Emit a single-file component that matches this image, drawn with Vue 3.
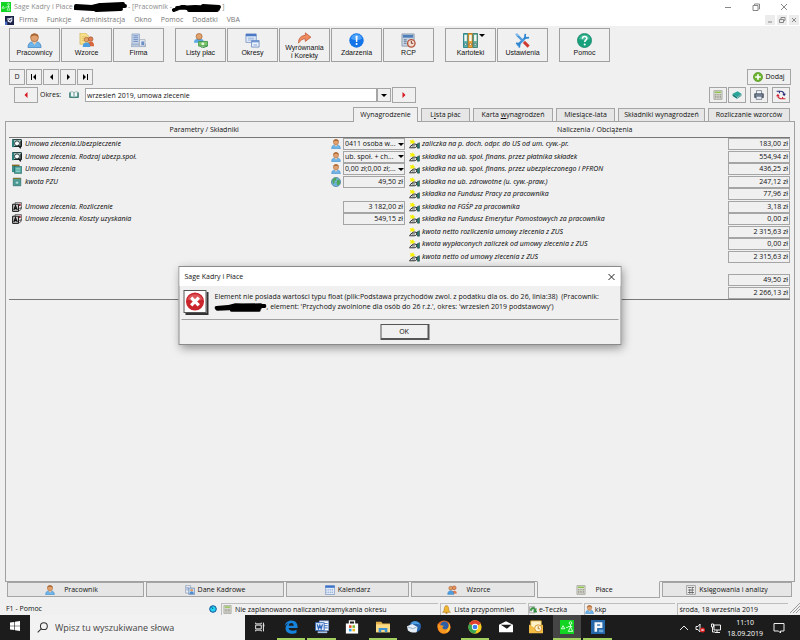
<template>
  <svg class="sprite" aria-hidden="true">
    <symbol id="user" viewBox="0 0 16 16">
      <path d="M1 15.500c0-4 2-6 4.500-6h5c2.500 0 4.500 2 4.500 6z" fill="#6db4ea" stroke="#2f79b8" stroke-width=".7" />
      <path d="M5.500 9.500h5L8 12.500z" fill="#f3c9a0" />
      <circle cx="8" cy="5" r="4.200" fill="#e0a070" stroke="#9c5f2e" stroke-width=".6" />
      <path d="M3.800 5C3.500 2 5.500.5 8 .5s4.500 1.500 4.200 4.500c-1-2-2.500-2.400-4.200-2.400S4.800 3 3.800 5z" fill="#a8642f" />
    </symbol>
    <symbol id="users" viewBox="0 0 16 16">
      <circle cx="6" cy="5" r="3" fill="#e3a26b" stroke="#a8642f" />
      <circle cx="11.500" cy="4.500" r="3" fill="#e8935a" stroke="#a8502f" />
      <path d="M7 14c0-4 1-5 4.500-5s4 1 4 5z" fill="#e07b4f" />
      <path d="M1 15c0-4 2-6 5-6s5 2 5 6z" fill="#4b9fe0" stroke="#2f79b8" stroke-width=".6" />
    </symbol>
    <symbol id="templates" viewBox="0 0 16 16">
      <path d="M1 0h6l3 3v9H1z" fill="#f7df8e" stroke="#c9a540" stroke-width=".6" />
      <path d="M3 4h4M3 6h4M3 8h3" stroke="#d9b85a" stroke-width=".7" />
      <circle cx="8" cy="7" r="2.400" fill="#e3a26b" stroke="#a8642f" stroke-width=".7" />
      <circle cx="12.500" cy="6.500" r="2.400" fill="#e08050" stroke="#9c4f2e" stroke-width=".7" />
      <path d="M9 14c0-4 1.500-5 3.500-5S16 10 16 14z" fill="#d9653c" />
      <path d="M4 15c0-4 1.500-5 4-5s4 1 4 5z" fill="#4b9fe0" />
    </symbol>
    <symbol id="company" viewBox="0 0 16 16">
      <path d="M1 1h8v11H1z" fill="#c6d4ea" stroke="#8398bd" stroke-width=".7" />
      <path d="M2.500 3h5M2.500 5h5M2.500 7h5M2.500 9h5" stroke="#6f8dc2" />
      <path d="M0 12h16v2.500H0z" fill="#b9c8dc" stroke="#8ba0bd" stroke-width=".6" />
      <path d="M9 7h6v7H9z" fill="#e6ebf1" stroke="#98a4b5" stroke-width=".7" />
      <path d="M11 9h3v4h-3z" fill="#6a8fc6" />
    </symbol>
    <symbol id="payroll" viewBox="0 0 16 16">
      <path d="M1 10.500c0-3 1.500-4 3.500-4h4c2 0 3 1 3 4z" fill="#5aa9e6" />
      <circle cx="6.500" cy="3.700" r="3.200" fill="#e3a26b" stroke="#9c5f2e" stroke-width=".7" />
      <path d="M6 9h9.500v5H6z" fill="#7cc46a" stroke="#2e8b3a" stroke-width=".8" />
      <circle cx="10.500" cy="11.500" r="1.500" fill="#e9f8df" />
      <path d="M8 14l2 2 5-2" stroke="#2e8b3a" fill="none" />
    </symbol>
    <symbol id="windows" viewBox="0 0 16 16">
      <path d="M1 1h11v9H1z" fill="#e7effa" stroke="#6a88bd" stroke-width=".8" />
      <path d="M1 1h11v2.500H1z" fill="#4c79c6" />
      <path d="M3 5.500h7M3 7.500h7" stroke="#8ea9d6" />
      <path d="M7 8h8v7H7z" fill="#eef4fc" stroke="#5d7db5" stroke-width=".8" />
      <path d="M7 8h8v2H7z" fill="#6f96d6" />
      <path d="M9 12h4v1.500H9z" fill="#9fb9e4" />
    </symbol>
    <symbol id="redo" viewBox="0 0 16 14">
      <path d="M1 13C1 7 4 4 9 4V1l6.500 5L9 11V8C5.500 8 3.500 9.500 1 13z" fill="#f08a5f" stroke="#b84f2a" stroke-width=".8" />
    </symbol>
    <symbol id="alert" viewBox="0 0 16 16">
      <circle cx="8" cy="8" r="7.700" fill="#1474e8" />
      <path d="M2 6a6.200 6.200 0 0 1 12 0c-3 2-9 2-12 0z" fill="#4aa0fa" />
      <path d="M7 3h2.200L8.800 9.500H7.400z" fill="#fff" />
      <circle cx="8.100" cy="11.800" r="1.100" fill="#fff" />
    </symbol>
    <symbol id="rcp" viewBox="0 0 16 16">
      <path d="M1 1h13v13H1z" fill="#c8d3df" stroke="#7d8fa5" stroke-width=".8" />
      <path d="M2 2h11v3H2z" fill="#4f7fb8" />
      <path d="M3 7h3M3 9h3M3 11h3" stroke="#7991ad" stroke-width="1.300" />
      <circle cx="11" cy="11" r="4" fill="#f4ded2" stroke="#b5553a" stroke-width="1.400" />
      <path d="M11 8.500V11h2" stroke="#7a3425" fill="none" />
    </symbol>
    <symbol id="binders" viewBox="0 0 16 16">
      <path d="M.5.500h4.600v15H.5z" fill="#5cb8b0" stroke="#2e7f86" />
      <path d="M5.600.500h4.600v15H5.600z" fill="#f0a93c" stroke="#b8761d" />
      <path d="M10.700.500h4.800v15h-4.800z" fill="#6cb5a0" stroke="#3d7f76" />
      <path d="M1.500 2h2.600v6.500H1.500zM6.600 2h2.600v6.500H6.600zM11.800 2h2.600v6.500h-2.600z" fill="#f4f7f2" />
      <circle cx="2.800" cy="12" r="1.200" fill="#fff" stroke="#235f66" stroke-width=".7" />
      <circle cx="7.900" cy="12" r="1.200" fill="#fff" stroke="#8b5514" stroke-width=".7" />
      <circle cx="13" cy="12" r="1.200" fill="#fff" stroke="#2e5f54" stroke-width=".7" />
    </symbol>
    <symbol id="tools" viewBox="0 0 16 16">
      <path d="M2.500 13.500L12 4" stroke="#3f92d8" stroke-width="2.600" />
      <path d="M11 1l-.5 4.500 4.500-.5M1 11l4 .500-.5 4" stroke="#2f86d0" stroke-width="1.800" fill="none" />
      <path d="M2 2l7 7" stroke="#4d9bdc" stroke-width="2.400" />
      <path d="M9.500 9.500l5 5" stroke="#cf3a30" stroke-width="3.200" />
      <path d="M0 1.500L2 0l2.500 2.500-2 1z" fill="#89bce6" />
    </symbol>
    <symbol id="help" viewBox="0 0 16 16">
      <circle cx="8" cy="8" r="7.600" fill="#17a07c" stroke="#0d7a5f" stroke-width=".6" />
      <path d="M2 6.500a6.200 6.200 0 0 1 12 0c-3 1.500-9 1.500-12 0z" fill="#43b898" />
      <path d="M5.800 6c0-3 4.700-3 4.700-.3C10.500 7.500 8.200 7.600 8.200 9.700" stroke="#fff" stroke-width="1.700" fill="none" />
      <circle cx="8.200" cy="12.200" r="1.100" fill="#fff" />
    </symbol>
    <symbol id="book" viewBox="0 0 16 12">
      <path d="M1 2v8h6l1 1 1-1h6V2" fill="#2c8c80" stroke="#155e57" />
      <path d="M2.500 1C5 .5 7 1 8 2.500V10C7 9 5 8.500 2.500 9zM13.500 1C11 .5 9 1 8 2.500V10c1-1 3-1.500 5.500-1z" fill="#f1f7f6" stroke="#3d7a76" stroke-width=".7" />
    </symbol>
    <symbol id="plus" viewBox="0 0 16 16">
      <circle cx="8" cy="8" r="7.300" fill="#6cb52d" stroke="#4a8a1c" />
      <path d="M8 3.500v9M3.500 8h9" stroke="#fff" stroke-width="2.600" />
    </symbol>
    <symbol id="calc" viewBox="0 0 16 16">
      <path d="M1.500 1h13v14h-13z" fill="#e4e4dd" stroke="#8c8c84" />
      <path d="M3 2.500h10v2.500H3z" fill="#8fc04f" />
      <path d="M3 7.500h10M3 10h10M3 12.500h10" stroke="#8b8b80" stroke-width="1.500" stroke-dasharray="2 .7" />
    </symbol>
    <symbol id="teal-book" viewBox="0 0 16 14">
      <path d="M1 5l8-4 6 4-7 5z" fill="#29a59b" />
      <path d="M1 5v3.500L8 13v-3zM8 10v3l7-5V5z" fill="#137a74" />
      <path d="M8 11.500l7-5" stroke="#d9f1ee" />
    </symbol>
    <symbol id="printer" viewBox="0 0 16 16">
      <path d="M4 1h8v6H4z" fill="#f3f6fa" stroke="#4e5b6d" />
      <path d="M1 6h14v6H1z" fill="#5a6679" stroke="#2f3848" />
      <path d="M3.500 10h9v5h-9z" fill="#e3e9f1" stroke="#4e5b6d" />
      <path d="M2.500 8h11" stroke="#b2bdcc" />
    </symbol>
    <symbol id="refresh" viewBox="0 0 16 16">
      <path d="M1 2h4.500v3M5 2.500C9 1 13 3 13 7" stroke="#2a2f7c" stroke-width="1.800" fill="none" />
      <path d="M10 6h6l-3 4z" fill="#2a2f7c" />
      <path d="M15 14h-4.500v-3M11 13.500C7 15 3 13 3 9" stroke="#d02430" stroke-width="1.800" fill="none" />
      <path d="M0 10h6L3 6z" fill="#d02430" />
    </symbol>
    <symbol id="search-doc" viewBox="0 0 16 16">
      <path d="M1 1h14v11H1z" fill="#b8e0da" stroke="#142c2c" stroke-width="1.600" />
      <path d="M0 1v12h3.500V1z" fill="#2b7d78" />
      <circle cx="8" cy="7" r="4" fill="#f7fdfc" stroke="#1c2626" stroke-width="1.400" />
      <path d="M10.500 10l3.500 5M14.500 3v9" stroke="#111" stroke-width="2.200" />
    </symbol>
    <symbol id="pages" viewBox="0 0 16 16">
      <path d="M0 2h6v11H0z" fill="#3e8f8b" />
      <path d="M0 1h12v2.500H0z" fill="#7f6b2a" />
      <path d="M4 4h11.500v11H4z" fill="#4fa9a2" stroke="#1d5c5a" />
      <path d="M6 7h7M6 9.500h7M6 12h7" stroke="#b4e0da" />
    </symbol>
    <symbol id="page" viewBox="0 0 16 16">
      <path d="M2 2h12v12H2z" fill="#4fa9a2" stroke="#1d5c5a" />
      <path d="M2 1.500h12v2H2z" fill="#85752f" />
      <path d="M5 6.500h6v5H5z" fill="#a8dcd4" stroke="#266a66" />
    </symbol>
    <symbol id="cards" viewBox="0 0 16 16">
      <path d="M5 1h10v9H5z" fill="#fff" stroke="#222" />
      <path d="M1 3.500h9.500V15H1z" fill="#c9c9c9" stroke="#111" stroke-width="1.600" />
      <path d="M3 13l2.500-7 3 7M3.500 10.500h4.500" stroke="#111" stroke-width="2" fill="none" />
      <path d="M11 2.500h3v4h-3z" fill="#922f3c" />
      <path d="M11.500 14l3-2V8" stroke="#111" fill="none" />
    </symbol>
    <symbol id="hand" viewBox="0 0 16 14">
      <path d="M1 1l3 1 2-2 .8 2.500L9.500 4 7 5l-.5 2.500L4 6 1 6.500 2.500 4z" fill="#f6f000" />
      <path d="M.5 12.500h7c3 0 4-2 4-4.500L8.500 7C5 7 4 9 1 11.500" fill="#f2f5f0" stroke="#111" stroke-width="1.300" />
      <path d="M4 9.800h5" stroke="#111" />
      <path d="M11.500 7L15.200 5v8h-3z" fill="#2c7e74" stroke="#15332f" stroke-width=".8" />
    </symbol>
    <symbol id="globe" viewBox="0 0 16 16">
      <circle cx="8" cy="8" r="7.400" fill="#6fb1d8" stroke="#3c7796" />
      <path d="M3 4c2-2.500 4-3 6-2.500L8 5 5 6.500 6 9l-2 2C2 9 2 6 3 4zM10 5l3-1c2 3 2 6 0 8l-3 1-1-4z" fill="#4ea552" />
    </symbol>
    <symbol id="disk" viewBox="0 0 16 16">
      <circle cx="8" cy="8" r="6.600" fill="#23d3f1" stroke="#16529c" stroke-width="2" />
      <path d="M8 8L5 4" stroke="#083c68" stroke-width="1.500" />
    </symbol>
    <symbol id="bell" viewBox="0 0 16 16">
      <path d="M8 1c1.500 0 4 2 4 6 0 3 1 4 3 6H1c2-2 3-3 3-6 0-4 2.500-6 4-6z" fill="#f2b632" stroke="#a8741a" />
      <circle cx="8" cy="14" r="1.700" fill="#b77a18" />
    </symbol>
    <symbol id="edoc" viewBox="0 0 16 16">
      <path d="M1 3h9v11H1z" fill="#f1f1f1" stroke="#777" />
      <path d="M2 9c1-6 8-6 9-2l2-1-.5 5L8 9.500l2-1C8 6 5 7 4 11z" fill="#3fa34a" stroke="#1d6d2a" stroke-width=".7" />
      <path d="M8 12h6" stroke="#2e8b3a" stroke-width="2.500" />
    </symbol>
    <symbol id="calendar" viewBox="0 0 16 16">
      <path d="M.5 1h15v14H.5z" fill="#eaf1fb" stroke="#5c7fb8" />
      <path d="M.5 1h15v3.500H.5z" fill="#3c73c9" />
      <path d="M2 7h12M2 9.500h12M2 12h12" stroke="#8da9d4" stroke-width="1.400" stroke-dasharray="2 1" />
    </symbol>
    <symbol id="id-card" viewBox="0 0 16 16">
      <path d="M1 1h8v12H1z" fill="#eef2f7" stroke="#7e90ab" />
      <path d="M2 4h4M2 6h4M2 8h4" stroke="#6d8cc0" />
      <path d="M6 5h9.500v10H6z" fill="#c7d9ee" stroke="#5b7cab" />
      <circle cx="10.700" cy="8.500" r="2" fill="#e09a5c" />
      <path d="M7.500 14.500c0-3 1-4 3.200-4s3.200 1 3.200 4z" fill="#4a8ed4" />
    </symbol>
    <symbol id="ledger" viewBox="0 0 16 16">
      <path d="M1 1h14v14H1z" fill="#f5f5f5" stroke="#777" />
      <path d="M3 4h5M3 8h10M3 12h10M10 3v11M6 6v8M9 4h4" stroke="#5d5d5d" stroke-width="1.300" />
    </symbol>
    <symbol id="logo" viewBox="0 0 16 16">
      <path d="M0 0h16v16H0z" fill="#12d422" />
      <path d="M1.500 10l2-3.500 2 3.500zM7 8.500h2M10.500 3.500a1.500 1.500 0 1 0 3 0a1.500 1.500 0 1 0-3 0M12 5v3M9.500 13l2.500-5 2.500 5zM9 7.500h5" fill="none" stroke="#e8ffe8" stroke-width="1" />
    </symbol>
    <symbol id="mdi" viewBox="0 0 16 16">
      <path d="M0 0h16v16H0z" fill="#1c2346" />
      <path d="M4 4h4l5-2v7l-3 3-5-2z" fill="#e8ebf5" />
      <path d="M6 6l3 3 2-4" stroke="#2b3568" stroke-width="1.500" fill="none" />
      <path d="M0 10h4v6H0z" fill="#4870c8" />
    </symbol>
    <symbol id="t-view" viewBox="0 0 16 16">
      <path d="M1 1v2h9V1M1 15v-2h9v2M1 5h9v6H1zM13.500 1v14" fill="none" stroke="#e6e6e6" stroke-width="1.600" />
      <path d="M12.500 4h2.500v3h-2.500z" fill="#e6e6e6" />
    </symbol>
    <symbol id="t-edge" viewBox="0 0 16 16">
      <path d="M.8 7C1.500 3 4.500.5 8.500.5c4.500 0 7 3.200 7 7v1.700H5.300c.3 2 2 3.200 4.500 3.200 1.700 0 3.200-.4 4.500-1.200v3.300C13 15.200 11.200 15.600 9 15.600c-4.500 0-7.200-2.700-7.200-6.300 0-2.500 1.500-4.500 3.700-5.600C3.500 4 1.800 5.200.8 7zm4.600-.5h5.700c0-2-1-3-2.700-3S5.600 4.700 5.400 6.500z" fill="#1683dc" />
    </symbol>
    <symbol id="t-word" viewBox="0 0 16 16">
      <path d="M5 1h10.500v11H5z" fill="#fff" stroke="#7d9fd8" />
      <path d="M10 4h4.500M10 6.500h4.500M10 9h4.500" stroke="#5b86cc" stroke-width="1.300" />
      <path d="M.5 3h10v9H.5z" fill="#dce8f8" stroke="#2f66b8" />
      <path d="M2.500 5l1.500 5 1.500-4L7 10l1.500-5" fill="none" stroke="#2f66b8" stroke-width="1.500" />
      <path d="M3 14h11" stroke="#a9c4ea" stroke-width="2" />
    </symbol>
    <symbol id="t-store" viewBox="0 0 16 16">
      <path d="M5 5V1h6v4" fill="none" stroke="#fff" stroke-width="1.300" />
      <path d="M1 4h14v11.500H1z" fill="#fff" />
      <path d="M4.500 6h3v3h-3z" fill="#e65028" /><path d="M8.500 6h3v3h-3z" fill="#7ab82e" />
      <path d="M4.500 10h3v3h-3z" fill="#2b9fe6" /><path d="M8.500 10h3v3h-3z" fill="#f6b71b" />
    </symbol>
    <symbol id="t-folder" viewBox="0 0 16 16">
      <path d="M0 2h6l1.500 2H16v10H0z" fill="#e3b04a" />
      <path d="M0 5h16v9H0z" fill="#fbdc84" />
      <path d="M3 14V9h10v5h-3v-2.500H6V14z" fill="#3f93d2" />
    </symbol>
    <symbol id="t-bird" viewBox="0 0 16 16">
      <circle cx="9.500" cy="7.500" r="6.500" fill="#2463ab" />
      <path d="M0 7l6-2.500 6 3.500-1 6c-4 1-8 0-10-2z" fill="#e6eef6" />
      <path d="M1 8l6 2 4-2" stroke="#8ca9c9" fill="none" />
      <path d="M4 4C7 0 13 1 15.500 6 13 4 11 5 9 4.500z" fill="#4c9ee2" />
    </symbol>
    <symbol id="t-fox" viewBox="0 0 16 16">
      <circle cx="8" cy="8" r="7.500" fill="#ee6a1c" />
      <circle cx="8.500" cy="6.500" r="4.800" fill="#2c5fa8" />
      <path d="M.8 4L4 6l4 .500-2 2c1 3 5 3 7 0 1-2 .5-4-.5-6C17 6 16 14 9 15.500 3 16 0 10 .8 4z" fill="#f7971f" />
      <path d="M14 4c2 4 0 9-4 10 3-3 4-6 4-10z" fill="#fbd23c" />
    </symbol>
    <symbol id="t-chrome" viewBox="0 0 16 16">
      <circle cx="8" cy="8" r="7.600" fill="#f7cb1f" />
      <path d="M8 8L1.400 4.200a7.600 7.600 0 0 1 13.200 0z" fill="#e0412f" />
      <path d="M8 8L1.400 4.200A7.600 7.600 0 0 0 8 15.600L11 9.500z" fill="#3aa652" />
      <circle cx="8" cy="8" r="3.600" fill="#fff" /><circle cx="8" cy="8" r="2.700" fill="#3b7ded" />
    </symbol>
    <symbol id="t-mail" viewBox="0 0 16 16">
      <path d="M0 5.500L8 1.500l8 4V14H0z" fill="#fff" />
      <path d="M2 5.500h12.500L9 10z" fill="#1c1c1c" />
    </symbol>
    <symbol id="t-outlook" viewBox="0 0 16 16">
      <path d="M2 1h12v9H2z" fill="#fdf2c8" stroke="#d9a02a" />
      <path d="M0 5l8 5 8-5v10H0z" fill="#f3bc45" />
      <circle cx="10.500" cy="9.500" r="4" fill="#fff5d6" stroke="#d08c1b" />
      <path d="M10.500 7v3h2" stroke="#b87312" fill="none" />
    </symbol>
    <symbol id="t-p" viewBox="0 0 16 16">
      <path d="M0 0h16v16H0z" fill="#2467a8" />
      <path d="M4 2.500h9V9H7v4.500H4z" fill="#f2f7fc" />
      <path d="M7 5h3.500v1.500H7z" fill="#2467a8" />
      <path d="M9 11h5v3H9z" fill="#6ca7dc" />
    </symbol>
  </svg>

  <main class="desktop">
    <header class="titlebar">
      <svg class="i10"><use href="#logo" /></svg>
      <span class="app-name">Sage Kadry i Płace</span>
      <svg class="ink" viewBox="0 0 54 10"><path d="M2 4l16 1 8-2 25 1M1 6l18 1 10-1 18 1M22 8l24-1M27 3l22-1" /></svg>
      <span>- [Pracownik -</span>
      <svg class="ink short" viewBox="0 0 50 10"><path d="M2 8l8-3 14 3 22-1M5 6l18-1 23 1M17 8l28 0M31 4l16 1" /></svg>
      <span>]</span>
      <div class="win-buttons">
        <button aria-label="Minimalizuj"><svg viewBox="0 0 8 8"><path d="M1 4.500h6" /></svg></button>
        <button aria-label="Przywróć"><svg viewBox="0 0 8 8"><path d="M1 2.500h5v5H1zM2.500 2V1h5v5H6.500" /></svg></button>
        <button aria-label="Zamknij"><svg viewBox="0 0 8 8"><path d="M1 1l6 6M7 1L1 7" /></svg></button>
      </div>
    </header>

    <nav class="menubar">
      <svg class="i9"><use href="#mdi" /></svg>
      <a v-for="m in menu" :key="m" href="#">{{ m }}</a>
      <div class="mdi-buttons">
        <button aria-label="Minimalizuj okno"><svg viewBox="0 0 8 8"><path d="M2 6h4" /></svg></button>
        <button aria-label="Przywróć okno"><svg viewBox="0 0 8 8"><path d="M1.500 3.500h4v3h-4zM3 3V1.500h4v3H6" /></svg></button>
        <button aria-label="Zamknij okno"><svg viewBox="0 0 8 8"><path d="M2 2l4 4M6 2L2 6" /></svg></button>
      </div>
    </nav>

    <div class="toolbar">
      <div v-for="(group, gi) in tools" :key="gi" class="group">
        <button v-for="b in group" :key="b.label" class="tool">
          <svg :class="{ low: b.icon === 'redo' }"><use :href="'#' + b.icon" /></svg>
          <span>{{ b.label }}</span>
          <i v-if="b.drop" class="caret" />
        </button>
      </div>
    </div>

    <div class="nav-row">
      <button class="sq">D</button>
      <button v-for="n in navs" :key="n.name" class="sq" :aria-label="n.name">
        <svg viewBox="0 0 8 8"><path :d="n.d" /></svg>
      </button>
      <button class="add"><svg class="i10"><use href="#plus" /></svg>Dodaj</button>
    </div>

    <div class="period-row">
      <button class="arrow" aria-label="Poprzedni okres"><svg viewBox="0 0 8 8"><path d="M6 0v8L2 4z" /></svg></button>
      <label for="period">Okres:</label>
      <svg class="book"><use href="#book" /></svg>
      <input id="period" v-model="period" type="text">
      <button class="drop" aria-label="Rozwiń"><i class="caret" /></button>
      <button class="arrow" aria-label="Następny okres"><svg viewBox="0 0 8 8"><path d="M2 0v8l4-4z" /></svg></button>
      <div class="actions">
        <button v-for="a in actions" :key="a.icon" :aria-label="a.name"><svg class="i10"><use :href="'#' + a.icon" /></svg></button>
      </div>
    </div>

    <div class="tabs">
      <button v-for="(t, i) in tabs" :key="i" :class="{ active: i === 0 }">{{ t[0] }}<u>{{ t[1] }}</u>{{ t[2] }}</button>
    </div>

    <section class="panel">
      <div class="heads"><span>Parametry / Składniki</span><span>Naliczenia / Obciążenia</span></div>
      <div class="lists">
        <table class="params">
          <tbody>
            <tr v-for="(p, i) in params" :key="i">
              <td class="ic"><svg v-if="p.icon" class="i10"><use :href="'#' + p.icon" /></svg></td>
              <td class="name">{{ p.name }}</td>
              <td class="mark"><svg v-if="p.mark" class="i10"><use :href="'#' + p.mark" /></svg></td>
              <td class="val">
                <div v-if="p.select" class="pick">
                  <select :aria-label="p.name"><option>{{ p.value }}</option></select>
                  <i class="caret" />
                </div>
                <div v-else-if="p.value" class="box">{{ p.value }}</div>
              </td>
            </tr>
          </tbody>
        </table>
        <table class="charges">
          <tbody>
            <tr v-for="c in charges" :key="c[0]">
              <td class="ic"><svg class="hand"><use href="#hand" /></svg></td>
              <td class="name">{{ c[0] }}</td>
              <td class="val"><div class="box">{{ c[1] }}</div></td>
            </tr>
          </tbody>
        </table>
      </div>
      <div class="totals">
        <div v-for="s in totals" :key="s" class="box">{{ s }}</div>
      </div>
    </section>

    <div class="bottom-tabs">
      <button v-for="b in bottom" :key="b.label" :class="{ active: b.label === 'Płace', far: b.far }">
        <svg class="i10"><use :href="'#' + b.icon" /></svg><span>{{ b.label }}</span>
      </button>
    </div>

    <footer class="status">
      <span class="f1">F1 - Pomoc<svg class="i8"><use href="#disk" /></svg></span>
      <span class="cell"><svg class="i9"><use href="#calc" /></svg>Nie zaplanowano naliczania/zamykania okresu</span>
      <span class="cell"><svg class="i9"><use href="#bell" /></svg>Lista przypomnień</span>
      <span class="cell tight"><svg class="i9"><use href="#edoc" /></svg>e-Teczka</span>
      <span class="cell tight"><svg class="i9"><use href="#user" /></svg>kkp</span>
      <span class="cell">środa, 18 września 2019</span>
      <svg class="grip" viewBox="0 0 10 10"><path d="M0 10L10 0M3 10l7-7M6 10l4-4" /></svg>
    </footer>

    <div class="taskbar">
      <button class="start" aria-label="Start"><svg viewBox="0 0 16 16"><path d="M0 2.500l7-1v6H0zM8 1.300L16 0v7.500H8zM0 8.500h7v6l-7-1zM8 8.500h8V16l-8-1.300z" /></svg></button>
      <label class="search">
        <svg viewBox="0 0 16 16"><circle cx="10" cy="6" r="5" /><path d="M6.500 9.500L1 15" /></svg>
        <input type="text" placeholder="Wpisz tu wyszukiwane słowa" aria-label="Wyszukaj">
      </label>
      <div class="apps">
        <button v-for="a in apps" :key="a.icon" :class="{ open: a.open, current: a.icon === 'logo' }" :aria-label="a.name">
          <svg :class="{ small: a.icon === 't-view' }"><use :href="'#' + a.icon" /></svg>
        </button>
      </div>
      <div class="tray">
        <svg viewBox="0 0 10 10"><path d="M1 7l4-4 4 4" /></svg>
        <svg viewBox="0 0 10 10"><path d="M1 3.500h2L5 1v8L3 6.500H1z" /><circle class="mute" cx="7.500" cy="7" r="2.500" /><path d="M6.500 6l2 2M8.500 6l-2 2" /></svg>
        <svg viewBox="0 0 10 10"><path d="M3 2h6.500v5H3zM4 9.500h5M6 7v2.500M.5 1h2v3h-2zM1.500 4v5H4" /></svg>
        <div class="clock"><span>11:10</span><span>18.09.2019</span></div>
        <svg class="note" viewBox="0 0 12 12"><path d="M1 1.500h10v7.500H7.500v2L5.500 9H1z" /></svg>
      </div>
    </div>

    <div class="dialog" role="alertdialog" aria-labelledby="dlg-title">
      <div class="dlg-head">
        <span id="dlg-title">Sage Kadry i Płace</span>
        <button aria-label="Zamknij komunikat"><svg viewBox="0 0 8 8"><path d="M1 1l6 6M7 1L1 7" /></svg></button>
      </div>
      <div class="dlg-body">
        <div class="err"><svg viewBox="0 0 20 20"><circle cx="10" cy="10" r="9.500" fill="#c9252b" /><path d="M2 8a8.500 8.500 0 0 1 16 0c-4 2-12 2-16 0z" fill="#dc5558" /><path d="M6 6l8 8M14 6l-8 8" stroke="#fff" stroke-width="3.400" /></svg></div>
        <p>
          Element nie posiada wartości typu float (plik:Podstawa przychodów zwol. z podatku dla os. do 26, linia:38)&nbsp; (Pracownik:<br>
          <svg class="ink" viewBox="0 0 54 10"><path d="M2 6l12-1 8-2 30 1M3 7l18-1 26 0M18 8l28 0M22 4l26-1" /></svg>, element: 'Przychody zwolnione dla osób do 26 r.ż.', okres: 'wrzesień 2019 podstawowy')
        </p>
      </div>
      <div class="dlg-foot"><button>OK</button></div>
    </div>
  </main>
</template>

<script setup>
import { ref } from 'vue'

const period = ref('wrzesień 2019, umowa zlecenie')

const menu = ['Firma', 'Funkcje', 'Administracja', 'Okno', 'Pomoc', 'Dodatki', 'VBA']

const tools = [
  [
    { label: 'Pracownicy', icon: 'user' },
    { label: 'Wzorce', icon: 'templates' },
    { label: 'Firma', icon: 'company' }
  ],
  [
    { label: 'Listy płac', icon: 'payroll' },
    { label: 'Okresy', icon: 'windows' },
    { label: 'Wyrównania\ni Korekty', icon: 'redo' },
    { label: 'Zdarzenia', icon: 'alert' },
    { label: 'RCP', icon: 'rcp' }
  ],
  [
    { label: 'Kartoteki', icon: 'binders', drop: true },
    { label: 'Ustawienia', icon: 'tools' }
  ],
  [{ label: 'Pomoc', icon: 'help' }]
]

const navs = [
  { name: 'Pierwszy', d: 'M1 1h1v6H1zM6 1v6L3 4z' },
  { name: 'Poprzedni', d: 'M6 1v6L3 4z' },
  { name: 'Następny', d: 'M3 1v6l3-3z' },
  { name: 'Ostatni', d: 'M6 1h1v6H6zM2 1v6l3-3z' }
]

const actions = [
  { icon: 'calc', name: 'Kalkulator' },
  { icon: 'teal-book', name: 'Książka' },
  { icon: 'printer', name: 'Drukuj' },
  { icon: 'refresh', name: 'Odśwież' }
]

// [before, underlined accelerator, after]
const tabs = [
  ['Wynagrodzenie', '', ''],
  ['L', 'i', 'sta płac'],
  ['Karta ', 'w', 'ynagrodzeń'],
  ['Miesiące-lata', '', ''],
  ['Składniki wynagrodzeń', '', ''],
  ['Rozliczanie wzorców', '', '']
]

const params = [
  { icon: 'search-doc', name: 'Umowa zlecenia.Ubezpieczenie', mark: 'user', value: '0411 osoba w...', select: true },
  { icon: 'search-doc', name: 'Umowa zlecenia. Rodzaj ubezp.społ.', mark: 'user', value: 'ub. społ. + ch...', select: true },
  { icon: 'pages', name: 'Umowa zlecenia', mark: 'user', value: '0,00 zł;0,00 zł;...', select: true },
  { icon: 'page', name: 'kwota PZU', mark: 'globe', value: '49,50 zł' },
  {},
  { icon: 'cards', name: 'Umowa zlecenia. Rozliczenie', value: '3 182,00 zł' },
  { icon: 'cards', name: 'Umowa zlecenia. Koszty uzyskania', value: '549,15 zł' },
  {},
  {},
  {}
]

const charges = [
  ['zaliczka na p. doch. odpr. do US od um. cyw.-pr.', '183,00 zł'],
  ['składka na ub. społ. finans. przez płatnika składek', '554,94 zł'],
  ['składka na ub. społ. finans. przez ubezpieczonego i PFRON', '436,25 zł'],
  ['składka na ub. zdrowotne (u. cyw.-praw.)', '247,12 zł'],
  ['składka na Fundusz Pracy za pracownika', '77,96 zł'],
  ['składka na FGŚP za pracownika', '3,18 zł'],
  ['składka na Fundusz Emerytur Pomostowych za pracownika', '0,00 zł'],
  ['kwota netto rozliczenia umowy zlecenia z ZUS', '2 315,63 zł'],
  ['kwota wypłaconych zaliczek od umowy zlecenia z ZUS', '0,00 zł'],
  ['kwota netto od umowy zlecenia z ZUS', '2 315,63 zł']
]

const totals = ['49,50 zł', '2 266,13 zł']

const bottom = [
  { label: 'Pracownik', icon: 'user', far: true },
  { label: 'Dane Kadrowe', icon: 'id-card' },
  { label: 'Kalendarz', icon: 'calendar' },
  { label: 'Wzorce', icon: 'users', far: true },
  { label: 'Płace', icon: 'calc', far: true },
  { label: 'Księgowania i analizy', icon: 'ledger' }
]

const apps = [
  { icon: 't-view', name: 'Widok zadań' },
  { icon: 't-edge', name: 'Edge', open: true },
  { icon: 't-word', name: 'Word', open: true },
  { icon: 't-store', name: 'Sklep' },
  { icon: 't-folder', name: 'Eksplorator', open: true },
  { icon: 't-bird', name: 'Thunderbird' },
  { icon: 't-fox', name: 'Firefox' },
  { icon: 't-chrome', name: 'Chrome', open: true },
  { icon: 't-mail', name: 'Poczta' },
  { icon: 't-outlook', name: 'Outlook' },
  { icon: 'logo', name: 'Sage Kadry i Płace', open: true },
  { icon: 't-p', name: 'Płatnik', open: true }
]
</script>

<style>
body {
  background: #f0f0f0;
}
</style>

<style scoped>
* {
  box-sizing: border-box;
}

.sprite {
  position: absolute;
  width: 0;
  height: 0;
}

.desktop {
  position: relative;
  display: flex;
  flex-direction: column;
  min-height: 100vh;
  background: #f0f0f0;
  color: #111;
  font: 7px/10px "Open Sans", "Noto Sans", sans-serif;
}

button,
input,
select {
  margin: 0;
  padding: 0;
  border: 0;
  border-radius: 0;
  background: none;
  color: inherit;
  font: inherit;
}

svg {
  flex: none;
}

.i8 {
  width: 8px;
  height: 8px;
}

.i9 {
  width: 9px;
  height: 9px;
}

.i10 {
  width: 10px;
  height: 10px;
}

.ink {
  width: 54px;
  height: 10px;
  fill: none;
  stroke: #000;
  stroke-width: 4;
  stroke-linecap: round;
  stroke-linejoin: round;
}

.ink.short {
  width: 50px;
}

.caret {
  width: 0;
  height: 0;
  border: 3px solid transparent;
  border-top-color: #000;
  border-bottom: 0;
}

.titlebar {
  display: flex;
  align-items: center;
  height: 14px;
  padding-left: 1px;
  background: #fff;
  color: #8c8c8c;
}

.app-name {
  width: 60px;
  margin-left: 3px;
  white-space: nowrap;
}

.win-buttons {
  display: flex;
  gap: 20px;
  margin-left: auto;
  padding-right: 12px;
}

.win-buttons svg,
.mdi-buttons svg {
  display: block;
  width: 8px;
  height: 8px;
  fill: none;
  stroke: #888;
  stroke-width: 1;
}

.menubar {
  display: flex;
  align-items: center;
  gap: 9px;
  height: 12px;
  padding-left: 5px;
  background: #fff;
}

.menubar a {
  color: #777;
  text-decoration: none;
}

.menubar .i9 {
  margin-right: -4px;
}

.mdi-buttons {
  display: flex;
  gap: 2px;
  margin-left: auto;
  padding-right: 1px;
}

.mdi-buttons button {
  padding: 1px;
  background: #ececec;
}

.toolbar {
  display: flex;
  gap: 11px;
  padding: 2px 9px 0;
}

.group {
  display: flex;
  gap: 1px;
}

.tool {
  position: relative;
  display: flex;
  flex-direction: column;
  align-items: center;
  justify-content: space-between;
  width: 51px;
  height: 34px;
  padding: 4px 0;
  border: 1px solid #a0a0a0;
  font: 7px/8px "Liberation Sans", Arial, sans-serif;
  color: #111;
  white-space: pre-line;
}

.tool svg {
  width: 15px;
  height: 15px;
}

.tool svg.low {
  height: 12px;
}

.tool:has(.low) {
  padding: 3px 0 2px;
}

.tool .caret {
  position: absolute;
  top: 5px;
  right: 10px;
}

.nav-row {
  display: flex;
  gap: 1px;
  padding: 7px 9px 0;
}

.sq,
.add,
.arrow,
.drop,
.actions button {
  display: flex;
  align-items: center;
  justify-content: center;
  height: 16px;
  border: 1px solid #a5a5a5;
}

.sq {
  width: 16px;
}

.sq svg {
  width: 8px;
  height: 8px;
  fill: #000;
}

.add {
  gap: 2px;
  width: 44px;
  margin-left: auto;
}

.period-row {
  display: flex;
  align-items: center;
  padding: 2px 10px 0 14px;
}

.arrow {
  width: 24px;
}

.arrow svg {
  width: 6px;
  height: 6px;
  fill: #d81420;
}

.period-row label {
  width: 29px;
  margin-left: 2px;
}

.book {
  width: 10px;
  height: 8px;
}

#period {
  width: 292px;
  height: 14px;
  margin-left: 6px;
  padding: 0 1px;
  border: 1px solid #a5a5a5;
  background: #fff;
}

.drop {
  width: 14px;
  height: 14px;
  margin-right: 1px;
}

.actions {
  display: flex;
  gap: 4px;
  margin-left: auto;
}

.actions button {
  width: 18px;
}

.actions button:first-child {
  margin-right: -3px;
}

.tabs {
  display: grid;
  grid-template-columns: 65px 49px 80px 59px 87px 82px;
  justify-content: end;
  gap: 3px;
  z-index: 1;
  margin-bottom: -1px;
  padding: 4px 10px 0 0;
}

.tabs button {
  height: 14px;
  margin-top: 1px;
  border: 1px solid #a5a5a5;
  background: #e6e6e6;
  white-space: nowrap;
}

.tabs .active {
  height: 15px;
  margin-top: 0;
  border-bottom: 0;
  background: #f0f0f0;
}

.panel {
  flex: 1;
  margin: 0 5px;
  padding: 0 4px 0 3px;
  border: 1px solid #a0a0a0;
}

.heads {
  display: grid;
  grid-template-columns: 1fr 1fr;
  height: 16px;
  padding-top: 3px;
  border-bottom: 1px solid #777;
  text-align: center;
}

.lists {
  display: grid;
  grid-template-columns: 396px 1fr;
  gap: 3px;
}

table {
  width: 100%;
  height: 125px;
  border-collapse: collapse;
}

td {
  height: 12px;
  padding: 0;
  line-height: 10px;
}

td svg {
  display: block;
}

.name {
  font-family: "Noto Sans", sans-serif;
  font-style: italic;
  white-space: nowrap;
}

.ic {
  width: 14px;
}

.params .ic {
  width: 16px;
  padding-left: 3px;
}

.charges .ic {
  padding-left: 1px;
}

.hand {
  width: 11px;
  height: 10px;
}

.mark {
  width: 12px;
}

.val {
  width: 62px;
}

.box {
  height: 12px;
  padding-right: 1px;
  border: 1px solid #a5a5a5;
  line-height: 10px;
  text-align: right;
}

.pick {
  display: flex;
  align-items: center;
  height: 12px;
  border: 1px solid #a5a5a5;
}

.pick select {
  flex: 1;
  min-width: 0;
  padding-left: 1px;
  appearance: none;
  line-height: 10px;
}

.totals {
  display: grid;
  grid-template-rows: 1fr 1fr;
  justify-content: end;
  align-items: center;
  height: 37px;
  padding-top: 11px;
  border-bottom: 1px solid #777;
}

.totals .box {
  width: 62px;
}

.bottom-tabs {
  display: grid;
  grid-template-columns: 137fr 138fr 123fr 124fr 123fr 130fr;
  gap: 2px;
  height: 17px;
  margin-top: -1px;
  padding: 0 8px 0 7px;
}

.bottom-tabs button {
  display: flex;
  align-items: center;
  justify-content: center;
  gap: 3px;
  margin: 1px 0;
  border: 1px solid #a5a5a5;
  background: #e6e6e6;
}

.bottom-tabs .active {
  margin: 0;
  border-top-color: #f0f0f0;
  background: #f0f0f0;
}

.bottom-tabs .far {
  gap: 9px;
  padding-right: 8px;
}

.status {
  display: grid;
  grid-template-columns: 216px 218fr 86fr 54fr 92fr 111fr 10px;
  gap: 2px;
  height: 12px;
  margin-top: 5px;
  padding-left: 3px;
}

.status span {
  display: flex;
  align-items: center;
  overflow: hidden;
  white-space: nowrap;
}

.f1 {
  justify-content: space-between;
  padding: 0 2px 0 3px;
}

.cell {
  gap: 3px;
  padding: 0 1px;
  border: 1px solid #bdbdbd;
  border-width: 1px 0 0 1px;
}

.cell.tight {
  gap: 1px;
  padding: 0;
}

.grip {
  width: 10px;
  height: 10px;
  stroke: #999;
}

.taskbar {
  display: flex;
  height: 25px;
  background: #1c1c1c;
  color: #fff;
}

.start {
  width: 30px;
}

.start svg {
  width: 10px;
  height: 10px;
  fill: #fff;
}

.search {
  display: flex;
  align-items: center;
  gap: 7px;
  width: 215px;
  padding-left: 7px;
  background: #f2f2f2;
}

.search svg {
  width: 11px;
  height: 11px;
  fill: none;
  stroke: #333;
  stroke-width: 1.5;
}

.search input {
  flex: 1;
  min-width: 0;
  font-size: 9px;
}

.search input::placeholder {
  color: #444;
  opacity: 1;
}

.apps {
  display: flex;
  width: 46%;
}

.apps button {
  display: flex;
  flex: 1;
  align-items: center;
  justify-content: center;
  margin: 0 1px;
  border-bottom: 2px solid transparent;
}

.apps svg {
  width: 14px;
  height: 14px;
}

.apps svg.small {
  width: 10px;
  height: 10px;
}

.apps .open {
  border-color: #a3d160;
}

.apps .current {
  background: #454545;
}

.tray {
  display: flex;
  align-items: center;
  gap: 6px;
  margin-left: auto;
  padding-right: 15px;
}

.tray svg {
  width: 10px;
  height: 10px;
  fill: none;
  stroke: #eee;
}

.tray .mute {
  fill: #e02020;
  stroke: none;
}

.clock {
  display: flex;
  flex-direction: column;
  align-items: center;
  line-height: 11px;
}

.tray .note {
  width: 12px;
  height: 12px;
  margin-left: 4px;
}

.dialog {
  position: absolute;
  top: 266px;
  left: 50%;
  width: 443px;
  border: 1px solid #8a8a8a;
  background: #f0f0f0;
  box-shadow: 1px 3px 9px rgba(0, 0, 0, 0.4);
  transform: translateX(-50%);
}

.dlg-head {
  display: flex;
  align-items: center;
  justify-content: space-between;
  height: 19px;
  padding: 0 5px;
  background: #fff;
}

.dlg-head svg {
  display: block;
  width: 8px;
  height: 8px;
  fill: none;
  stroke: #222;
}

.dlg-body {
  display: flex;
  gap: 8px;
  height: 34px;
  margin: 0 2px;
  padding: 4px 2px 0;
  border-bottom: 1px solid #a0a0a0;
}

.err {
  width: 23px;
  height: 23px;
  padding: 1px;
  border: 1px solid #555;
  background: #fff;
  box-shadow: 2px 2px 0 #333;
}

.err svg {
  display: block;
  width: 19px;
  height: 19px;
}

.dlg-body p {
  margin: 2px 0 0;
  line-height: 10px;
  white-space: nowrap;
}

.dlg-body .ink {
  width: 52px;
  margin: -2px 0;
  vertical-align: middle;
}

.dlg-foot {
  display: flex;
  justify-content: center;
  padding: 4px 0;
}

.dlg-foot button {
  width: 49px;
  height: 16px;
  margin-left: 9px;
  border: 1px solid #555;
  border-width: 1px 2px 2px 1px;
}
</style>
